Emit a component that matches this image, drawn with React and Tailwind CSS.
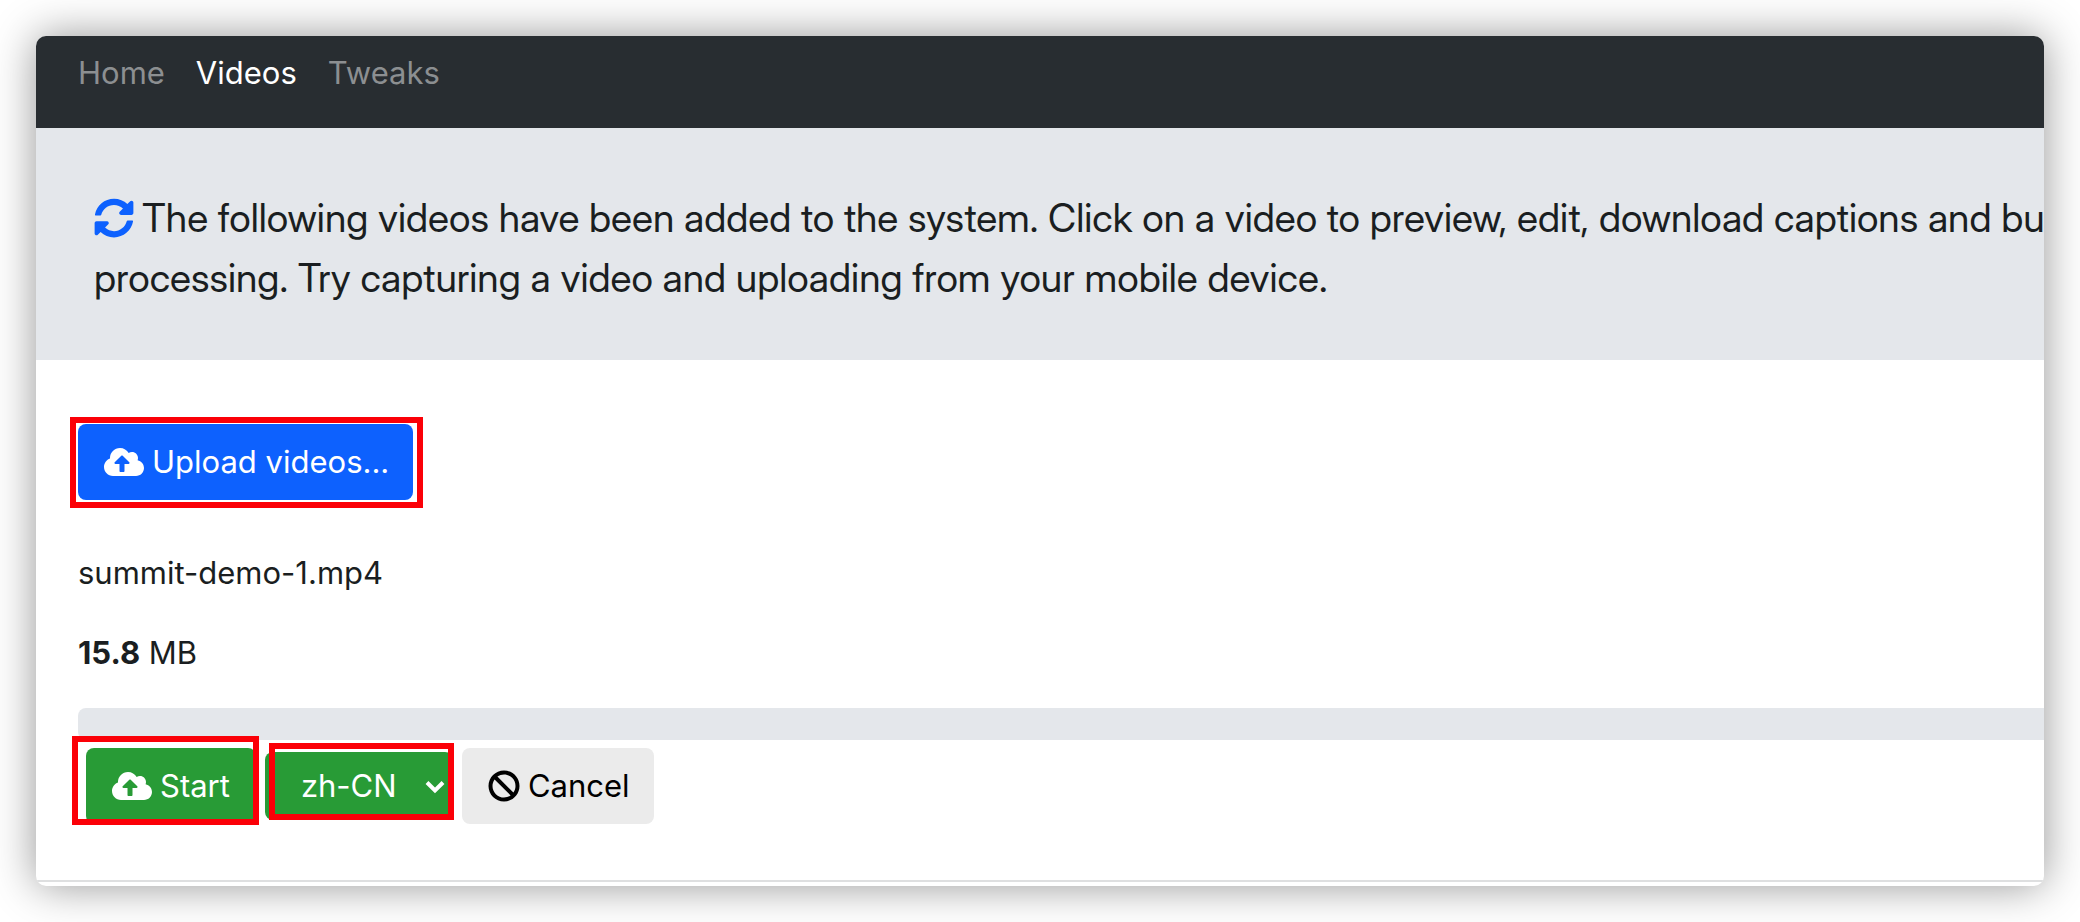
import { FaCloudUploadAlt, FaSyncAlt, FaBan } from "react-icons/fa";

function Highlight({ className }) {
  return <span aria-hidden="true" className={`pointer-events-none absolute border-[6px] border-[#fb0007] ${className}`} />;
}

function NavLink({ active, children }) {
  return (
    <a href="#" aria-current={active ? "page" : undefined} className={active ? "text-white" : "text-[#8c8f91]"}>
      {children}
    </a>
  );
}

export default function App() {
  return (
    <div className="bg-white p-9 font-['Inter','Liberation_Sans',sans-serif] text-[31px] leading-[48px] text-[#1a1e21]">
      <div className="overflow-hidden rounded-[10px] bg-white shadow-[0_0_44px_rgba(0,0,0,0.42)]">
        <nav className="flex gap-[31px] bg-[#282d31] px-[42px] pt-[13px] pb-[31px]">
          <NavLink>Home</NavLink>
          <NavLink active>Videos</NavLink>
          <NavLink>Tweaks</NavLink>
        </nav>

        <header className="bg-[#e4e7eb] px-[58px] pt-[60px] pb-[52px]">
          <p className="font-['Inter_Display','Inter',sans-serif] text-[39px] leading-[60px] whitespace-nowrap">
            <button type="button" aria-label="Refresh" className="mr-2 inline-block align-[-6px] text-[#0d61fe]">
              <FaSyncAlt className="size-10" />
            </button>
            The following videos have been added to the system. Click on a video to preview, edit, download captions and burn
            <br />
            processing. Try capturing a video and uploading from your mobile device.
          </p>
        </header>

        <main className="pt-16 pl-[42px]">
          <div className="relative inline-flex">
            <button type="button" className="flex h-[76px] items-center gap-2 rounded-lg bg-[#0d61fe] pr-6 pl-[26px] text-white">
              <FaCloudUploadAlt className="size-10" />
              Upload videos...
            </button>
            <Highlight className="-top-[7px] -right-[10px] -bottom-2 -left-2" />
          </div>

          <p className="mt-[49px]">summit-demo-1.mp4</p>
          <p className="mt-8">
            <strong className="font-bold">15.8</strong> MB
          </p>
          <div role="progressbar" aria-label="Upload progress" aria-valuenow={0} className="mt-[31px] h-8 rounded-l-lg bg-[#e4e7eb]" />

          <div className="flex items-center gap-[9px] pt-2 pb-14 pl-2">
            <div className="relative">
              <button type="button" className="flex h-[76px] items-center gap-2 rounded-lg bg-[#289b36] px-[26px] text-white">
                <FaCloudUploadAlt className="size-10" />
                Start
              </button>
              <Highlight className="-top-3 -right-[3px] -bottom-px -left-[14px]" />
            </div>
            <div className="relative">
              <select
                aria-label="Language"
                className="block h-[68px] w-[188px] appearance-none rounded-lg bg-[#289b36] pl-9 text-white"
              >
                <option>zh-CN</option>
              </select>
              <svg
                aria-hidden="true"
                viewBox="0 0 20 14"
                className="pointer-events-none absolute top-7 right-2 h-[14px] w-5 fill-none stroke-white stroke-[4]"
              >
                <path d="M2 2.5 10 10.5 18 2.5" />
              </svg>
              <Highlight className="-top-[9px] -right-px bottom-0 left-1" />
            </div>
            <button type="button" className="flex h-[76px] items-center gap-2 rounded-lg bg-[#ebebeb] pr-6 pl-[26px] text-black">
              <FaBan className="size-8" />
              Cancel
            </button>
          </div>
          <hr className="-ml-[42px] mb-1 border-t-2 border-[#dedfe0]" />
        </main>
      </div>
    </div>
  );
}
